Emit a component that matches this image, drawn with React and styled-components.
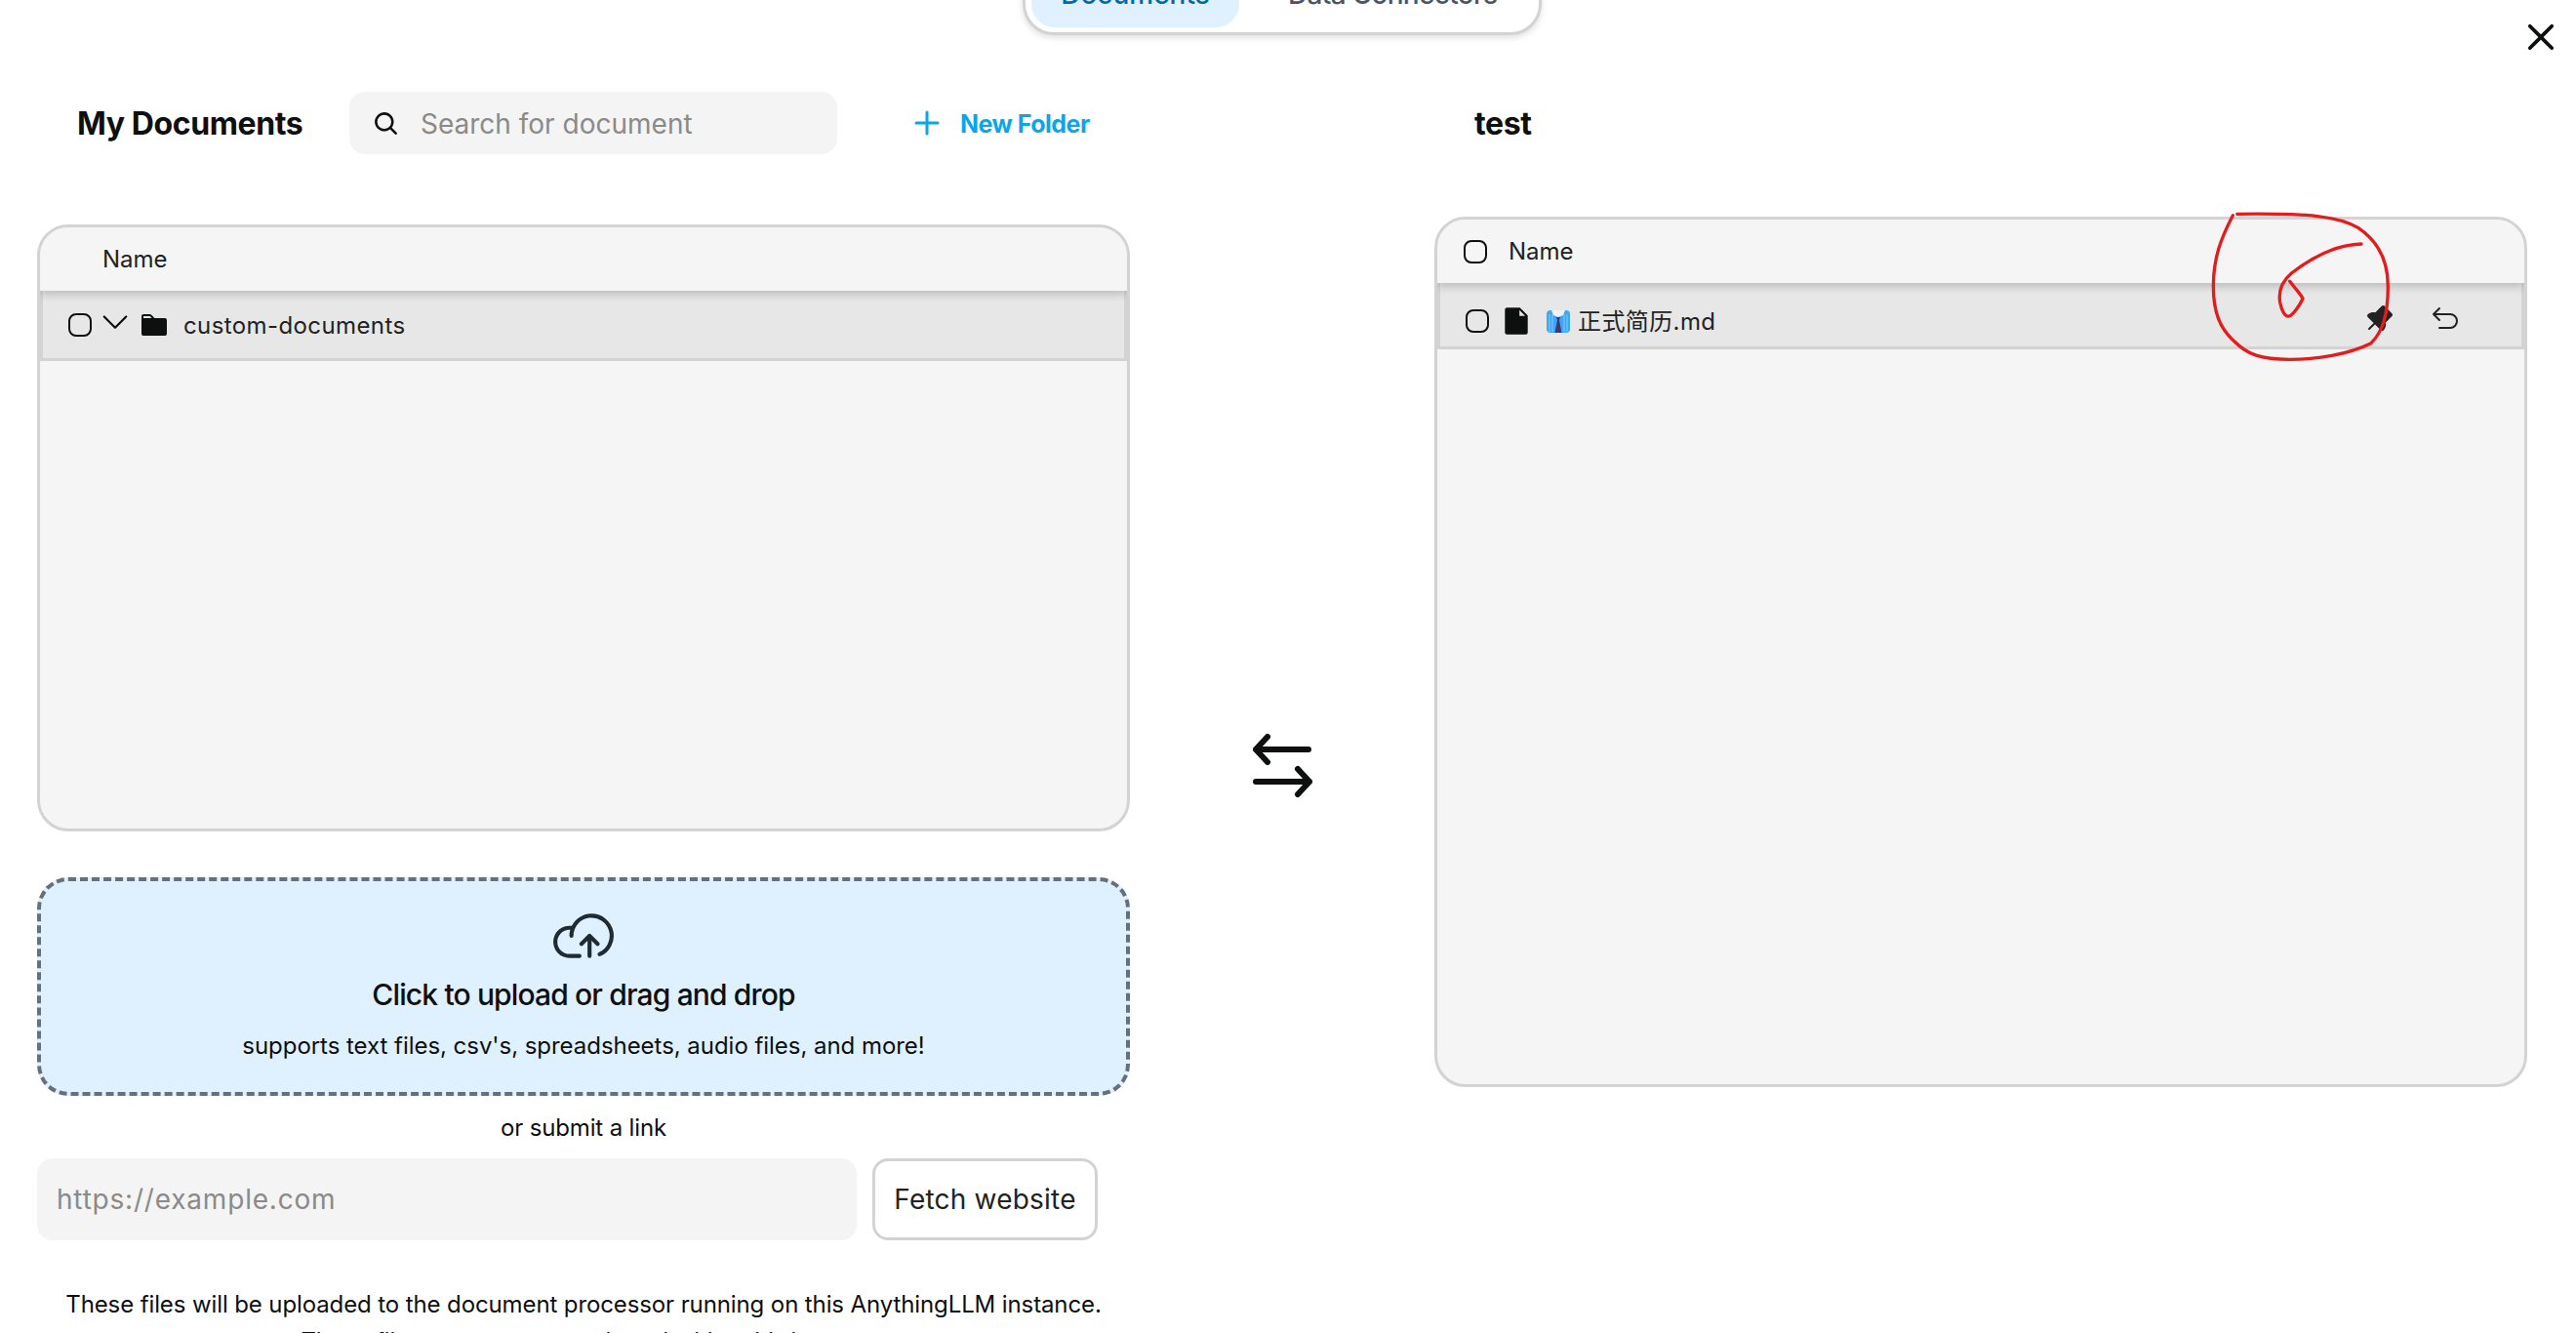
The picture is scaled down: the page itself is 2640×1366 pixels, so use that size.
import React from "react";
import styled, { createGlobalStyle } from "styled-components";
import { PiMagnifyingGlassBold, PiPlusBold, PiCaretDown, PiFolderFill, PiFileFill, PiPushPinFill, PiArrowUUpLeft, PiCloudArrowUp, PiXBold } from "react-icons/pi";

const Global = createGlobalStyle`
  html, body { margin: 0; padding: 0; background: #fff; overflow: hidden; }
  * { box-sizing: border-box; }
  body { font-family: Inter, "Noto Sans CJK SC", "Liberation Sans", sans-serif; color: #0e0f0f; }
`;

const Page = styled.div`
  position: relative;
  width: 2640px;
  height: 1366px;
  overflow: hidden;
`;
const TabStrip = styled.div`
  display: flex;
  justify-content: center;
  height: 36px;
`;
const TabBar = styled.div`
  display: flex;
  align-items: center;
  gap: 50px;
  width: 532px;
  height: 84px;
  margin-top: -48px;
  margin-left: -12px;
  padding: 8px 6px;
  background: #fff;
  border: 3px solid #d3d3d3;
  border-radius: 32px;
  box-shadow: 0 3px 6px rgba(0,0,0,.12);
`;
const Tab = styled.div`
  display: flex;
  align-items: center;
  justify-content: center;
  height: 68px;
  flex: none;
  ${p => p.$w ? `width: ${p.$w}px;` : ""}
  border-radius: 24px;
  font-size: 28px;
  font-weight: 500;
  letter-spacing: ${p => p.$active ? "0" : "-0.7px"};
  color: ${p => p.$active ? "#026aa2" : "#4b5563"};
  background: ${p => p.$active ? "#dff1fe" : "transparent"};
`;
const Body = styled.div`
  display: flex;
  padding: 58px 0 0 38px;
`;
const LeftCol = styled.div`
  width: 1120px;
  flex: none;
  display: flex;
  flex-direction: column;
`;
const Middle = styled.div`
  width: 312px;
  height: 1382px;
  flex: none;
  display: flex;
  align-items: center;
  justify-content: center;
  padding-left: 4px;
`;
const RightCol = styled.div`
  width: 1120px;
  flex: none;
  display: flex;
  flex-direction: column;
`;
const HeadRow = styled.div`
  display: flex;
  align-items: center;
  height: 64px;
  margin-bottom: ${p => p.$mb}px;
  padding-left: ${p => p.$pl}px;
`;
const Title = styled.h2`
  margin: 0;
  padding-top: 2px;
  font-size: 32px;
  font-weight: 700;
  letter-spacing: -0.4px;
  line-height: 62px;
  width: ${p => p.$w}px;
`;
const Search = styled.div`
  display: flex;
  align-items: center;
  gap: 22px;
  width: 500px;
  height: 64px;
  padding: 2px 0 0 24px;
  background: #f4f4f4;
  border-radius: 16px;
  font-size: 28px;
  color: #8a8a8a;
  svg { color: #0e0f0f; font-size: 27px; margin-top: -2px; }
`;
const NewFolder = styled.div`
  display: flex;
  align-items: center;
  gap: 18px;
  margin-left: 76px;
  padding-top: 2px;
  color: #0ba5ec;
  font-size: 25px;
  font-weight: 700;
  letter-spacing: -0.5px;
  svg { font-size: 32px; margin-top: -2px; }
`;
const Table = styled.div`
  height: ${p => p.$h}px;
  background: #f5f5f5;
  border: 3px solid #d3d3d3;
  border-radius: 32px;
  overflow: hidden;
`;
const HeaderRow = styled.div`
  display: flex;
  align-items: center;
  height: 65px;
  padding-left: ${p => p.$pl}px;
  gap: 22px;
  font-size: 24px;
  color: #222;
  box-shadow: 0 4px 8px rgba(0,0,0,.18);
  position: relative;
  background: #f5f5f5;
`;
const Row = styled.div`
  display: flex;
  align-items: center;
  height: ${p => p.$h}px;
  padding: ${p => p.$pt}px 0 0 26px;
  background: #e7e7e7;
  border: 3px solid #d3d3d3;
  border-top: none;
  font-size: 24px;
  letter-spacing: .4px;
  color: #222;
`;
const Check = styled.span`
  display: block;
  flex: none;
  width: 24px;
  height: 24px;
  border: 2.5px solid #0e0f0f;
  border-radius: 8px;
`;
const RowName = styled.span`
  margin-left: ${p => p.$ml}px;
  margin-top: ${p => p.$mt}px;
  white-space: nowrap;
`;
const IconSlot = styled.span`
  display: flex;
  flex: none;
  margin-left: ${p => p.$ml}px;
  margin-top: ${p => p.$mt || 0}px;
  font-size: ${p => p.$size}px;
  color: #0e0f0f;
`;
const RowActions = styled.div`
  margin-left: auto;
  margin-bottom: 4px;
  display: flex;
  align-items: center;
  gap: 36px;
  padding-right: 62px;
  font-size: 32px;
`;
const Drop = styled.div`
  display: flex;
  flex-direction: column;
  align-items: center;
  height: 224px;
  margin-top: 47px;
  padding-top: 23px;
  background: #dff1fe;
  border: 4px dashed #65707c;
  border-radius: 32px;
  svg { font-size: 66px; color: #1f2a33; }
`;
const DropTitle = styled.div`
  margin-top: 7px;
  font-size: 30px;
  font-weight: 500;
  line-height: 40px;
  letter-spacing: -0.85px;
`;
const DropSub = styled.div`
  margin-top: 17px;
  font-size: 24px;
  line-height: 32px;
  letter-spacing: -0.04px;
`;
const OrLink = styled.div`
  margin-top: 17px;
  text-align: center;
  font-size: 24px;
  line-height: 32px;
  letter-spacing: -0.15px;
`;
const LinkRow = styled.div`
  display: flex;
  gap: 16px;
  margin-top: 15px;
`;
const LinkInput = styled.div`
  display: flex;
  align-items: center;
  width: 840px;
  height: 84px;
  padding-left: 20px;
  background: #f4f4f4;
  border-radius: 16px;
  font-size: 28px;
  letter-spacing: .8px;
  color: #8a8a8a;
`;
const FetchButton = styled.div`
  display: flex;
  align-items: center;
  justify-content: center;
  width: 231px;
  height: 84px;
  background: #fff;
  border: 3px solid #d3d3d3;
  border-radius: 16px;
  font-size: 28px;
  letter-spacing: .2px;
  color: #222;
`;
const Note = styled.p`
  margin: 47px 0 0;
  text-align: center;
  font-size: 24px;
  line-height: 38px;
  letter-spacing: -0.11px;
`;
const Close = styled.div`
  position: absolute;
  top: 18px;
  right: 16px;
  display: flex;
  font-size: 40px;
`;
const Scribble = styled.svg`
  position: absolute;
  left: 2220px;
  top: 200px;
  pointer-events: none;
`;

const ShirtIcon = () => (
  <svg width="24" height="24" viewBox="0 0 24 24" style={{ flex: "none" }}>
    <rect y="1" width="24" height="23" rx="4" fill="#3ea6f6" />
    <path d="M3 5v18M6 5v18M18 5v18M21 5v18" stroke="#7cc6fb" strokeWidth="1.2" />
    <path d="M5 1h14l-2 5-5 2-5-2z" fill="#f2f2f2" />
    <path d="M10 8h4l-1 3 2.5 13h-7L11 11z" fill="#3a3a78" />
  </svg>
);

const SwapArrows = () => (
  <svg width="64" height="68" viewBox="0 0 64 68" fill="none" stroke="#0e0f0f" strokeWidth="6" strokeLinecap="round" strokeLinejoin="round">
    <path d="M57 17H3M15 4 3 17l12 13" />
    <path d="M3 50h55M46 37l12 13-12 13" />
  </svg>
);

export default function App() {
  return (
    <Page>
      <Global />
      <TabStrip>
        <TabBar>
          <Tab $active $w={213}>Documents</Tab>
          <Tab>Data Connectors</Tab>
        </TabBar>
      </TabStrip>
      <Body>
        <LeftCol>
          <HeadRow $mb={72} $pl={41}>
            <Title $w={279}>My Documents</Title>
            <Search><PiMagnifyingGlassBold />Search for document</Search>
            <NewFolder><PiPlusBold />New Folder</NewFolder>
          </HeadRow>
          <Table $h={622}>
            <HeaderRow $pl={64}>Name</HeaderRow>
            <Row $h={72} $pt={0}>
              <Check />
              <IconSlot $ml={6} $size={36} $mt={-8}><PiCaretDown /></IconSlot>
              <IconSlot $ml={6} $size={32}><PiFolderFill /></IconSlot>
              <RowName $ml={14} $mt={2}>custom-documents</RowName>
            </Row>
          </Table>
          <Drop>
            <PiCloudArrowUp />
            <DropTitle>Click to upload or drag and drop</DropTitle>
            <DropSub>supports text files, csv's, spreadsheets, audio files, and more!</DropSub>
          </Drop>
          <OrLink>or submit a link</OrLink>
          <LinkRow>
            <LinkInput>https://example.com</LinkInput>
            <FetchButton>Fetch website</FetchButton>
          </LinkRow>
          <Note>
            These files will be uploaded to the document processor running on this AnythingLLM instance.<br />
            These files are not sent or shared with a third party.
          </Note>
        </LeftCol>
        <Middle><SwapArrows /></Middle>
        <RightCol>
          <HeadRow $mb={64} $pl={41}>
            <Title>test</Title>
          </HeadRow>
          <Table $h={892}>
            <HeaderRow $pl={27}><Check />Name</HeaderRow>
            <Row $h={68} $pt={12}>
              <Check />
              <IconSlot $ml={11} $size={34}><PiFileFill /></IconSlot>
              <IconSlot $ml={14} $size={24}><ShirtIcon /></IconSlot>
              <RowName $ml={8} $mt={-2}>正式简历.md</RowName>
              <RowActions>
                <PiPushPinFill />
                <PiArrowUUpLeft />
              </RowActions>
            </Row>
          </Table>
        </RightCol>
      </Body>
      <Close><PiXBold /></Close>
      <Scribble width="320" height="190" viewBox="0 0 960 570" fill="none" stroke="#e51c1c" strokeWidth="10" strokeLinecap="round">
        <path d="M205 62C170 130 145 190 145 280C145 360 165 410 210 450C250 490 290 505 380 505C460 505 560 490 630 455C665 420 682 370 682 280C682 200 650 140 590 100C530 65 440 55 218 58" />
        <path d="M600 150C520 152 450 190 385 240C350 270 345 300 350 330C355 355 365 375 378 372C390 368 410 340 420 318C415 305 395 285 380 265" />
      </Scribble>
    </Page>
  );
}
